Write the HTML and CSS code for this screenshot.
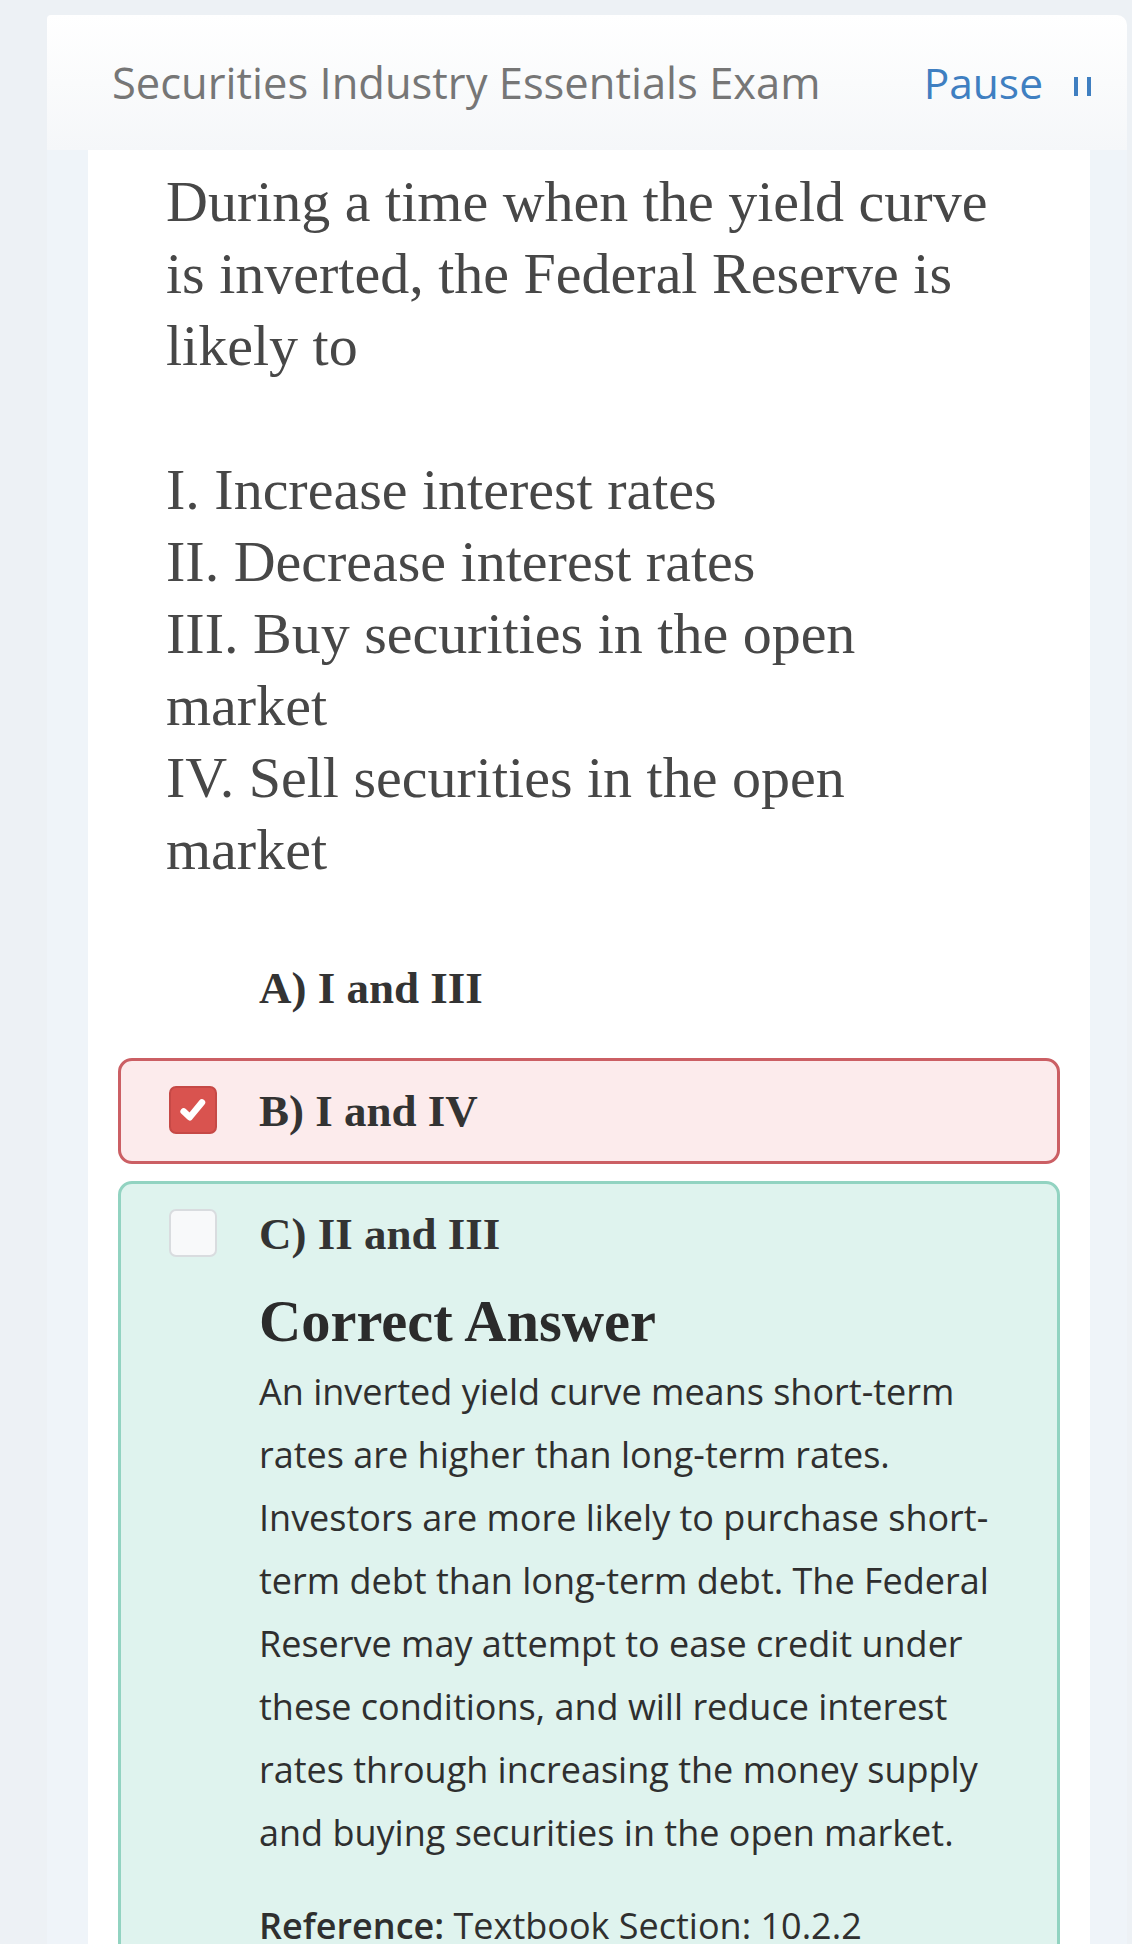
FILE: index.html
```html
<!DOCTYPE html>
<html lang="en">
<head>
  <meta charset="UTF-8">
  <title>Securities Industry Essentials Exam</title>
  <link rel="stylesheet" href="styles.css">
</head>
<body>
<div class="page">
  <div class="header">
    <span class="exam-title">Securities Industry Essentials Exam</span>
    <span class="pause">Pause <i class="pause-icon"><b></b><b></b></i></span>
  </div>
  <div class="main">
    <div class="panel">
      <p class="question">During a time when the yield curve is inverted, the Federal Reserve is likely to<br><br>I. Increase interest rates<br>II. Decrease interest rates<br>III. Buy securities in the open market<br>IV. Sell securities in the open market</p>

      <ul class="options">
        <li class="option">
          <span class="check hidden"></span>
          <div class="opt-body">
            <div class="opt-label">A) I and III</div>
          </div>
        </li>
        <li class="option wrong">
          <span class="check checked">
            <svg viewBox="0 0 20 20" width="36" height="36"><path d="M4.8 10.8 L8.2 14 L15 5.8" fill="none" stroke="#fff" stroke-width="3.6" stroke-linecap="round" stroke-linejoin="round"/></svg>
          </span>
          <div class="opt-body">
            <div class="opt-label">B) I and IV</div>
          </div>
        </li>
        <li class="option right">
          <span class="check"></span>
          <div class="opt-body">
            <div class="opt-label">C) II and III</div>
            <h2 class="answer-title">Correct Answer</h2>
            <p class="explain">An inverted yield curve means short-term rates are higher than long-term rates. Investors are more likely to purchase short-term debt than long-term debt. The Federal Reserve may attempt to ease credit under these conditions, and will reduce interest rates through increasing the money supply and buying securities in the open market.</p>
            <p class="explain ref"><b>Reference:</b> Textbook Section: 10.2.2</p>
          </div>
        </li>
      </ul>
    </div>
  </div>
</div>
</body>
</html>
```

FILE: styles.css
```css
* {
  padding: 0;
  margin: 0;
  list-style: none;
  box-sizing: border-box;
}

body {
  background: #edf1f5;
  font-family: "Open Sans", "Liberation Sans", sans-serif;
  overflow: hidden;
}

.page {
  margin: 15px 5px 0 47px;
}

.header {
  height: 135px;
  padding: 0 36px 0 65px;
  display: flex;
  align-items: center;
  justify-content: space-between;
  background: linear-gradient(to bottom, #ffffff, #f5f7f9);
  border-radius: 4px 10px 0 0;
}

.exam-title {
  font-size: 43.5px;
  color: #767676;
}

.pause {
  font-size: 42.5px;
  color: #3f7fc1;
  display: flex;
  align-items: center;
}

.pause-icon {
  display: flex;
  gap: 9px;
  margin-left: 31px;
  margin-top: 8px;
}

.pause-icon b {
  width: 4px;
  height: 19px;
  background: #3f7fc1;
}

.main {
  background: #eff4f9;
  padding: 0 37px 0 41px;
  min-height: 1800px;
}

.panel {
  background: #fff;
  padding: 16px 30px 0 30px;
  min-height: 1800px;
}

.question {
  margin: 0 50px 0 48px;
  font-family: "Liberation Serif", "Times New Roman", serif;
  font-size: 58px;
  line-height: 72px;
  color: #474747;
}

.options {
  margin-top: 49px;
}

.option {
  display: flex;
  align-items: flex-start;
  border: 3px solid transparent;
  border-radius: 14px;
  padding: 23px 47px 23px 48px;
  margin-bottom: 17px;
}

.option.wrong {
  background: #fcebec;
  border-color: #cb5f64;
}

.option.right {
  background: #dff3ee;
  border-color: #92d3c1;
  padding-bottom: 60px;
}

.check {
  flex: none;
  width: 48px;
  height: 48px;
  margin-top: 2px;
  margin-right: 42px;
  border-radius: 7px;
  border: 2px solid #d9dcdf;
  background: #f8f9fa;
  display: flex;
  align-items: center;
  justify-content: center;
}

.check.hidden {
  visibility: hidden;
}

.check.checked {
  background: #d9534f;
  border-color: #c64946;
}

.opt-body {
  flex: 1;
}

.opt-label {
  font-family: "Liberation Serif", "Times New Roman", serif;
  font-weight: bold;
  font-size: 45px;
  line-height: 54px;
  color: #333;
}

.answer-title {
  margin-top: 27px;
  font-family: "Liberation Serif", "Times New Roman", serif;
  font-weight: bold;
  font-size: 58.5px;
  line-height: 68px;
  color: #2b2b2b;
}

.explain {
  margin-top: 4px;
  font-size: 36px;
  line-height: 63px;
  color: #2f2f2f;
}

.explain.ref {
  margin-top: 30px;
}

.explain.ref b {
  font-weight: 600;
}
```
